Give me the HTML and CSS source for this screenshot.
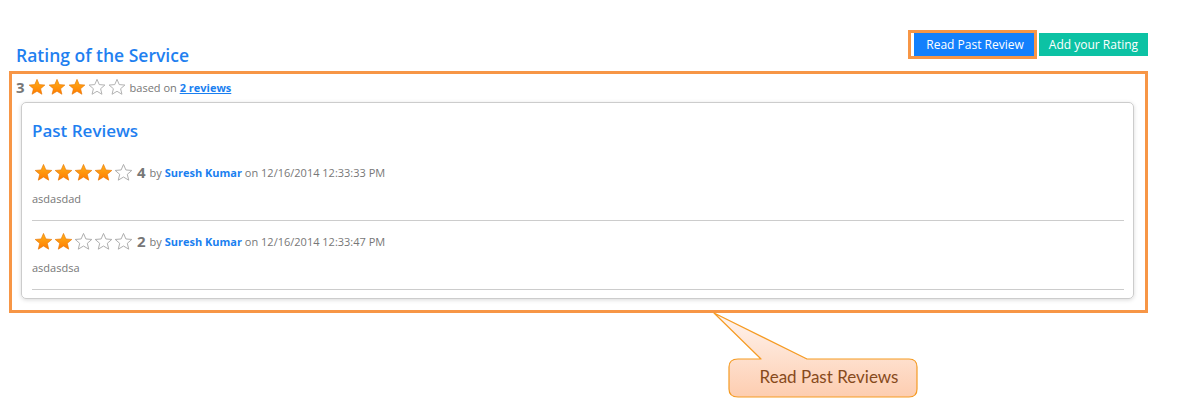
FILE: index.html
```html
<!DOCTYPE html>
<html lang="en">
<head>
    <meta charset="UTF-8">
    <title>Rating of the Service</title>
    <link rel="stylesheet" href="styles.css">
</head>
<body>
    <svg class="defs" width="0" height="0">
        <defs>
            <linearGradient id="starFill" x1="0" y1="0" x2="0" y2="1">
                <stop offset="0" stop-color="#ffb21a"/>
                <stop offset="1" stop-color="#ff7b00"/>
            </linearGradient>
            <symbol id="star" viewBox="0 0 24 24">
                <path d="M12 1.8l3 7 7.5.6-5.7 4.9 1.8 7.4L12 17.7l-6.6 4 1.8-7.4-5.7-4.9 7.5-.6z"/>
            </symbol>
        </defs>
    </svg>

    <div class="wrap">
        <div class="top">
            <h1>Rating of the Service</h1>
            <div class="actions">
                <button class="btn btn-read">Read Past Review</button>
                <button class="btn btn-add">Add your Rating</button>
            </div>
        </div>

        <div class="rating-box">
            <div class="summary">
                <span class="score">3</span>
                <span class="stars">
                    <svg class="on"><use href="#star"/></svg>
                    <svg class="on"><use href="#star"/></svg>
                    <svg class="on"><use href="#star"/></svg>
                    <svg class="off"><use href="#star"/></svg>
                    <svg class="off"><use href="#star"/></svg>
                </span>
                <span class="muted">based on <a href="#">2 reviews</a></span>
            </div>

            <div class="panel">
                <h2>Past Reviews</h2>

                <div class="review">
                    <div class="review-head">
                        <span class="stars big">
                            <svg class="on"><use href="#star"/></svg>
                            <svg class="on"><use href="#star"/></svg>
                            <svg class="on"><use href="#star"/></svg>
                            <svg class="on"><use href="#star"/></svg>
                            <svg class="off"><use href="#star"/></svg>
                        </span>
                        <span class="score">4</span>
                        <span class="muted">by <b class="author">Suresh Kumar</b> on 12/16/2014 12:33:33 PM</span>
                    </div>
                    <p class="comment">asdasdad</p>
                </div>

                <div class="review">
                    <div class="review-head">
                        <span class="stars big">
                            <svg class="on"><use href="#star"/></svg>
                            <svg class="on"><use href="#star"/></svg>
                            <svg class="off"><use href="#star"/></svg>
                            <svg class="off"><use href="#star"/></svg>
                            <svg class="off"><use href="#star"/></svg>
                        </span>
                        <span class="score">2</span>
                        <span class="muted">by <b class="author">Suresh Kumar</b> on 12/16/2014 12:33:47 PM</span>
                    </div>
                    <p class="comment">asdasdsa</p>
                </div>
            </div>
        </div>
    </div>

    <!-- annotation callout -->
    <svg class="callout" width="240" height="100" viewBox="0 0 240 100">
        <defs>
            <linearGradient id="calloutFill" x1="0" y1="0" x2="0" y2="1">
                <stop offset="0" stop-color="#fff5f0"/>
                <stop offset="1" stop-color="#fdcdb0"/>
            </linearGradient>
        </defs>
        <path d="M14 8 L61 54 L38 54 Q29 54 29 62 L29 84 Q29 92 38 92 L209 92 Q217 92 217 84 L217 62 Q217 54 209 54 L107 54 Z"
              fill="url(#calloutFill)" stroke="#f59b23" stroke-width="1.2" stroke-linejoin="round"/>
        <text x="129" y="78" text-anchor="middle">Read Past Reviews</text>
    </svg>
</body>
</html>
```

FILE: styles.css
```css
body {
    margin: 0;
    font-family: "Open Sans", Arial, sans-serif;
    background-color: #fff;
    color: #666;
}

.defs {
    position: absolute;
}

.wrap {
    width: 1139px;
    margin-left: 9px;
    padding-top: 30px;
}

.top {
    display: flex;
    justify-content: space-between;
    align-items: flex-start;
}

h1 {
    margin: 13px 0 0 7px;
    font-size: 17.5px;
    font-weight: 600;
    color: #1f80f0;
}

.actions {
    display: flex;
    gap: 5px;
    padding-top: 3px;
}

.btn {
    height: 23px;
    border: none;
    padding: 0 8px;
    font-family: "Open Sans", Arial, sans-serif;
    font-size: 12px;
    color: #fff;
    cursor: pointer;
}

.btn-read {
    width: 123px;
    background-color: #1380fc;
    border-left: 3px solid #fff;
    outline: 3px solid #f79646;
    padding-left: 10px;
}

.btn-add {
    width: 109px;
    background-color: #0cc2a4;
}

.rating-box {
    margin-top: 4px;
    border: 3px solid #f79646;
    padding: 1px 11px 11px 9px;
}

.summary {
    display: flex;
    align-items: center;
    height: 24px;
    margin-left: -5px;
}

.score {
    font-size: 15px;
    font-weight: bold;
    color: #777;
    margin-right: 3px;
}

.stars {
    display: inline-flex;
    gap: 2px;
    margin-right: 4px;
}

.stars svg {
    width: 18px;
    height: 18px;
}

.stars.big {
    gap: 1px;
}

.stars.big svg {
    width: 19px;
    height: 19px;
}

.stars .on {
    fill: url(#starFill);
    stroke: #e57300;
    stroke-width: 0.8;
}

.stars .off {
    fill: #fff;
    stroke: #aaa;
    stroke-width: 1.2;
}

.muted {
    font-size: 11px;
    color: #777;
}

.muted a {
    color: #1a7ff0;
    font-weight: bold;
}

.panel {
    margin-top: 3px;
    border: 1px solid #ccc;
    border-radius: 5px;
    box-shadow: 0 1px 4px rgba(0, 0, 0, 0.15);
    padding: 0 9px 8px 10px;
}

h2 {
    margin: 16px 0 19px 0;
    font-size: 17px;
    font-weight: 600;
    color: #1f80f0;
}

.review {
    border-bottom: 1px solid #ccc;
}

.review-head {
    display: flex;
    align-items: center;
    height: 22px;
    margin-left: 2px;
}

.review-head .score {
    margin-right: 4px;
}

.author {
    color: #1a7ff0;
}

.comment {
    margin: 8px 0 14px 0;
    font-size: 11px;
    color: #777;
}

.review + .review {
    margin-top: 9px;
}

.callout {
    position: absolute;
    left: 700px;
    top: 305px;
}

.callout text {
    font-family: Lato, "Open Sans", sans-serif;
    font-size: 17px;
    fill: #874a1c;
}
```
